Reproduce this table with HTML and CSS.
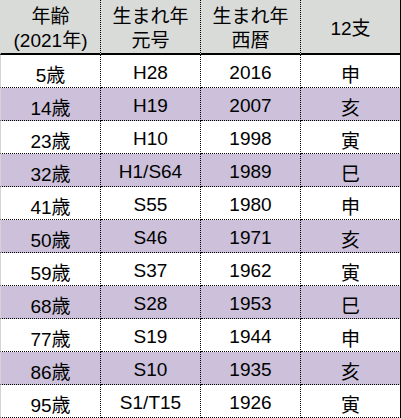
FILE: index.html
```html
<!DOCTYPE html>
<html lang="ja">
<head>
<meta charset="utf-8">
<title>年齢早見表</title>
<link rel="stylesheet" href="styles.css">
</head>
<body>
<div class="sheet">
  <div class="row head">
    <div class="cell"><span>年齢</span><span>(2021年)</span></div>
    <div class="cell"><span>生まれ年</span><span>元号</span></div>
    <div class="cell"><span>生まれ年</span><span>西暦</span></div>
    <div class="cell"><span>12支</span></div>
  </div>
  <div class="row"><div class="cell">5歳</div><div class="cell">H28</div><div class="cell">2016</div><div class="cell">申</div></div>
  <div class="row alt"><div class="cell">14歳</div><div class="cell">H19</div><div class="cell">2007</div><div class="cell">亥</div></div>
  <div class="row"><div class="cell">23歳</div><div class="cell">H10</div><div class="cell">1998</div><div class="cell">寅</div></div>
  <div class="row alt"><div class="cell">32歳</div><div class="cell">H1/S64</div><div class="cell">1989</div><div class="cell">巳</div></div>
  <div class="row"><div class="cell">41歳</div><div class="cell">S55</div><div class="cell">1980</div><div class="cell">申</div></div>
  <div class="row alt"><div class="cell">50歳</div><div class="cell">S46</div><div class="cell">1971</div><div class="cell">亥</div></div>
  <div class="row"><div class="cell">59歳</div><div class="cell">S37</div><div class="cell">1962</div><div class="cell">寅</div></div>
  <div class="row alt"><div class="cell">68歳</div><div class="cell">S28</div><div class="cell">1953</div><div class="cell">巳</div></div>
  <div class="row"><div class="cell">77歳</div><div class="cell">S19</div><div class="cell">1944</div><div class="cell">申</div></div>
  <div class="row alt"><div class="cell">86歳</div><div class="cell">S10</div><div class="cell">1935</div><div class="cell">亥</div></div>
  <div class="row"><div class="cell">95歳</div><div class="cell">S1/T15</div><div class="cell">1926</div><div class="cell">寅</div></div>
</div>
</body>
</html>
```

FILE: styles.css
```css
html, body {
  margin: 0;
  padding: 0;
  background: #ffffff;
}

.sheet {
  width: 401px;
  font-family: "Liberation Sans", "Noto Sans CJK JP", sans-serif;
  font-size: 19px;
  color: #000000;
}

.row {
  display: grid;
  grid-template-columns: 101px 100px 100px 100px;
  height: 33px;
  background: #ffffff;
}

.row.alt {
  background: #ccc0da;
}

.row.head {
  height: 55px;
  background: #d9dbd8;
}

.cell {
  box-sizing: border-box;
  display: flex;
  align-items: center;
  justify-content: center;
  padding-top: 4px;
  border-right: 1px dotted #000000;
  border-bottom: 1px dotted #000000;
  white-space: nowrap;
}

.cell:first-child {
  border-left: 1px solid #d4d4d4;
}

.cell:last-child {
  border-right: 1px solid #000000;
}

.head .cell {
  flex-direction: column;
  padding-top: 5px;
  line-height: 24px;
  border-bottom: 2px solid #000000;
}

.head .cell:first-child {
  border-left-color: #d9dbd8;
}
```
